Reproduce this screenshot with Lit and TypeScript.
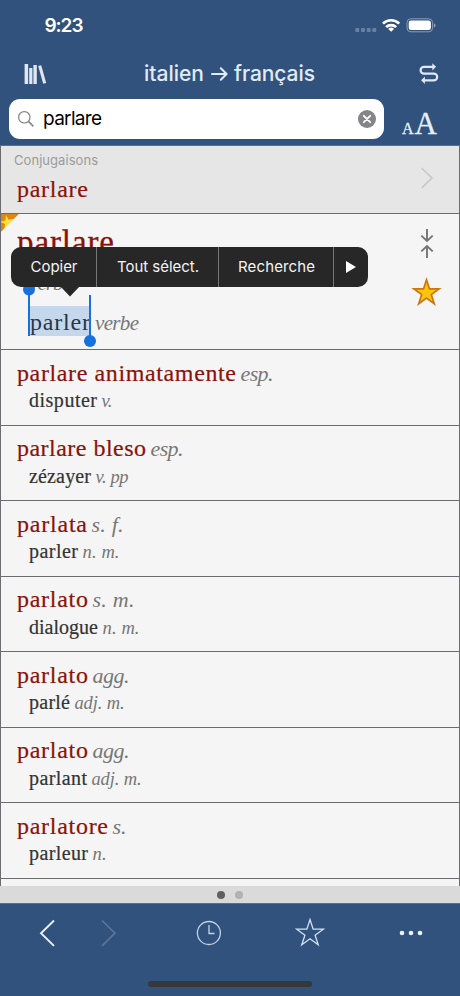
import { LitElement, html, css, svg } from "lit";
import { customElement, property } from "lit/decorators.js";

/* Text run whose tracking is adjusted so that it spans `w` pixels. */
@customElement("tracked-text")
class TrackedText extends LitElement {
  @property({ type: Number }) w = 0;
  @property() text = "";
  static styles = css`
    :host { display: inline-block; white-space: pre; }
    .run { display: inline-block; }
  `;
  updated() {
    const el = this.renderRoot.querySelector(".run") as HTMLElement;
    el.style.letterSpacing = "0";
    const natural = el.getBoundingClientRect().width;
    el.style.letterSpacing = `${(this.w - natural) / Math.max(1, this.text.length - 1)}px`;
    this.style.width = `${this.w}px`;
  }
  render() {
    return html`<span class="run">${this.text}</span>`;
  }
}

interface Entry {
  word: string; ww: number; pos: string; pw: number;
  tr: string; tw: number; tpos: string; tpw: number;
}

const entries: Entry[] = [
  { word: "parlare animatamente", ww: 219, pos: "esp.", pw: 33, tr: "disputer", tw: 68, tpos: "v.", tpw: 11 },
  { word: "parlare bleso", ww: 129, pos: "esp.", pw: 33, tr: "zézayer", tw: 62, tpos: "v. pp", tpw: 33 },
  { word: "parlata", ww: 70, pos: "s. f.", pw: 32, tr: "parler", tw: 49, tpos: "n. m.", tpw: 37 },
  { word: "parlato", ww: 71, pos: "s. m.", pw: 42, tr: "dialogue", tw: 69, tpos: "n. m.", tpw: 37 },
  { word: "parlato", ww: 71, pos: "agg.", pw: 37, tr: "parlé", tw: 41, tpos: "adj. m.", tpw: 50 },
  { word: "parlato", ww: 71, pos: "agg.", pw: 37, tr: "parlant", tw: 58, tpos: "adj. m.", tpw: 50 },
  { word: "parlatore", ww: 91, pos: "s.", pw: 14, tr: "parleur", tw: 59, tpos: "n.", tpw: 14 },
];

const t = (text: string, w: number, cls = "") =>
  html`<tracked-text class=${cls} .text=${text} .w=${w}></tracked-text>`;

const starPoints = "0,-1 .225,-.31 .951,-.309 .364,.118 .588,.809 0,.382 -.588,.809 -.364,.118 -.951,-.309 -.225,-.31";
const star = (cx: number, cy: number, r: number, rot = 0) => svg`
  <polygon points=${starPoints} transform="translate(${cx} ${cy}) rotate(${rot}) scale(${r})" vector-effect="non-scaling-stroke"></polygon>`;

@customElement("app-root")
class AppRoot extends LitElement {
  static styles = css`
    :host {
      display: flex; flex-direction: column; width: 460px; height: 996px;
      overflow: hidden; background: #31527c; color: #fff;
      font-family: Inter, "Liberation Sans", sans-serif;
    }
    * { box-sizing: border-box; }
    svg { display: block; fill: none; overflow: visible; }
    .status { height: 50px; flex: none; display: flex; justify-content: space-between; padding: 12px 25px 0 44.5px; }
    .time { font-size: 19px; font-weight: 600; line-height: 27px; }
    .nav { height: 49px; flex: none; display: grid; grid-template-columns: 120px 171px 1fr; align-items: center; padding: 0 22px 1px 24px; }
    .pair { display: flex; align-items: center; justify-content: space-between; font-size: 21px; font-weight: 500; line-height: 28px; color: #e1ebf8; }
    .swap { justify-self: end; margin-bottom: 2px; }
    .search { height: 46px; flex: none; display: flex; padding: 0 23px 0 9px; justify-content: space-between; }
    .field { width: 375px; height: 40px; border-radius: 11px; background: #fff; color: #000; display: flex; align-items: center; padding: 0 8px 0 9px; }
    .query { font-size: 19px; margin-left: 9px; flex: 1; line-height: 26px; }
    .sizes { display: flex; align-items: baseline; gap: 1px; font-family: "Liberation Serif", serif; color: #e6f0fb; line-height: 50px; -webkit-text-stroke: .3px #e6f0fb; }
    .small { font-size: 16px; }
    .big { font-size: 31px; }
    .list {
      flex: none; height: 741px; overflow: hidden; background: #f5f5f5;
      border: 1px solid #6c6c6f; border-bottom: 0; position: relative;
      font-family: "Liberation Serif", serif;
    }
    .conj { height: 67px; background: #e6e6e6; display: flex; justify-content: space-between; align-items: center; padding: 0 26px 0 13px; }
    .label { font-family: Inter, sans-serif; font-size: 13px; line-height: 16px; color: #9b9b9b; }
    .labels { display: flex; flex-direction: column; height: 100%; padding-top: 6px; }
    .chev { margin-bottom: 3px; }
    .conj .word { margin: 6px 0 0 3px; line-height: 30px; }
    .word { font-size: 24px; color: #8b1208; -webkit-text-stroke: .2px #8b1208; }
    .main { height: 136px; border-top: 1px solid #6c6c6f; display: flex; justify-content: space-between; position: relative; }
    .maintext { padding: 9px 0 0 16px; display: flex; flex-direction: column; }
    .headword { font-size: 33px; line-height: 38px; color: #8b1208; -webkit-text-stroke: .3px #8b1208; }
    .it { font-style: italic; color: #777; }
    .kind { font-size: 21px; line-height: 26px; margin: 9px 0 0 12px; }
    .selrow { display: flex; align-items: baseline; gap: 5px; margin: 10px 0 0 12px; line-height: 32px; height: 30px; }
    .sel { background: #c5d7ea; color: #26384f; font-size: 24px; padding-left: 1px; height: 30px; position: relative; display: flex; }
    .selrow .it { font-size: 21px; }
    .tools { width: 32px; margin-right: 16px; padding-top: 15px; display: flex; flex-direction: column; align-items: center; gap: 20px; }
    .corner { position: absolute; left: -1px; top: 0; }
    .handles { position: absolute; left: -6px; top: -23px; }
    .entry { height: 75.57px; border-top: 1px solid #6c6c6f; padding: 7.5px 0 0 16px; }
    .l1 { display: flex; align-items: baseline; gap: 4.5px; line-height: 30px; height: 30px; }
    .l2 { display: flex; align-items: baseline; gap: 4.5px; line-height: 24px; padding-left: 12px; margin-top: .5px; }
    .l1 .it { font-size: 22px; }
    .tr { font-size: 20px; color: #333; -webkit-text-stroke: .2px #333; }
    .l2 .it { font-size: 18.5px; }
    .last { border-top: 1px solid #6c6c6f; height: 10px; }
    .menu {
      position: absolute; left: 10px; top: 101px; width: 357px; height: 40px; border-radius: 10px;
      background: #272727; display: flex; color: #f4f4f4; font: 15px/40px Inter, sans-serif;
    }
    .menu .item { display: flex; align-items: center; justify-content: center; border-right: 1px solid #777; padding-left: 1px; }
    .menu .item:last-of-type { border-right: 0; }
    .m1 { width: 86px; } .m2 { width: 122px; } .m3 { width: 115px; } .m4 { width: 33px; }
    .tip { position: absolute; left: 49px; top: 39px; }
    .pager { height: 17px; flex: none; background: #dadada; display: flex; justify-content: center; align-items: center; gap: 10px; }
    .dot { width: 8px; height: 8px; border-radius: 50%; background: #b1b1b1; }
    .dot.on { background: #606060; }
    .tabs { flex: 1; border-top: 1px solid #54708e; display: flex; flex-direction: column; align-items: center; justify-content: space-between; padding-bottom: 9px; }
    .home { width: 164px; height: 6px; border-radius: 3px; background: #373838; }
  `;

  entry(e: Entry) {
    return html`<div class="entry">
      <div class="l1">${t(e.word, e.ww, "word")}${t(e.pos, e.pw, "it")}</div>
      <div class="l2">${t(e.tr, e.tw, "tr")}${t(e.tpos, e.tpw, "it")}</div>
    </div>`;
  }

  render() {
    return html`
      <div class="status">
        ${t("9:23", 39, "time")}
        <svg width="80" height="26" viewBox="355 12 80 26">
          <g fill="#6580a3"><rect x="355.3" y="28" width="4" height="4" rx="1"/><rect x="361" y="28" width="4" height="4" rx="1"/><rect x="366.7" y="28" width="4" height="4" rx="1"/><rect x="372.3" y="28" width="4" height="4" rx="1"/></g>
          <g stroke="#fff" stroke-width="2.7"><path d="M383 23.6a11.5 11.5 0 0 1 16.2 0"/><path d="M386.1 27.1a7.1 7.1 0 0 1 10 0"/></g>
          <path fill="#fff" d="M391.1 31.8 388.2 28.9a4.2 4.2 0 0 1 5.8 0z"/>
          <rect x="407" y="18.8" width="25.6" height="13" rx="3.8" stroke="#8b9db7"/>
          <rect x="408.7" y="20.5" width="22.2" height="9.6" rx="2.3" fill="#fff"/>
          <path fill="#8b9db7" d="M433.9 23.2c2.3.8 2.3 3.5 0 4.3z"/>
        </svg>
      </div>
      <div class="nav">
        <svg width="23" height="20" viewBox="24 63 23 20">
          <g fill="#dfe6ef"><rect x="24.6" y="63" width="3.5" height="20"/><rect x="29.2" y="67" width="3.2" height="16"/><rect x="33.4" y="64" width="3.4" height="19"/><path d="m38.2 65 3-.8 5 17.8-3 .8z"/></g>
        </svg>
        <div class="pair">
          ${t("italien", 60)}
          <svg width="17" height="16" viewBox="0 0 17 16" stroke="#e1ebf8" stroke-width="2" stroke-linecap="round" stroke-linejoin="round"><path d="M1 8h14.500M9.800 2.200 15.600 8l-5.800 5.800"/></svg>
          ${t("français", 81)}
        </div>
        <svg class="swap" width="18" height="20" viewBox="420 63 18 20" stroke="#dfe9f5" stroke-width="2.200">
          <path d="M434 66.800h-10a3.400 3.400 0 0 0 0 6.800h9.800a3.400 3.400 0 0 1 0 6.800H423.500"/>
          <g fill="#dfe9f5" stroke="none"><path d="M432.300 63.200l3.800 3.600-3.800 3.600z"/><path d="M424.900 76.600l-3.800 3.700 3.800 3.600z"/></g>
        </svg>
      </div>
      <div class="search">
        <div class="field">
          <svg width="16" height="16" viewBox="0 0 16 16" stroke="#858585" stroke-width="1.200"><circle cx="6.300" cy="6.300" r="5.700"/><path d="m10.400 10.400 5 5" stroke-width="1.500"/></svg>
          <span class="query">${t("parlare", 59)}</span>
          <svg width="18" height="18" viewBox="0 0 18 18"><circle cx="9" cy="9" r="9" fill="#858587"/><path stroke="#fff" stroke-width="1.900" stroke-linecap="round" d="m5.800 5.800 6.400 6.400m0-6.400-6.400 6.400"/></svg>
        </div>
        <div class="sizes"><span class="small">A</span><span class="big">A</span></div>
      </div>
      <div class="list">
        <div class="conj">
          <div class="labels">${t("Conjugaisons", 84, "label")}${t("parlare", 71, "word")}</div>
          <svg class="chev" width="12" height="22" viewBox="0 0 12 22" stroke="#c6c6c6" stroke-width="1.500"><path d="m.7 1 10.300 10-10.300 10"/></svg>
        </div>
        <div class="main">
          <svg class="corner" width="19" height="19" viewBox="0 0 19 19"><path fill="#df8613" d="M0 0h19L0 19z"/><g fill="#ffe03c">${star(7.5, 8.500, 7.500, -12)}</g><path fill="#f5f5f5" d="M19 0v19H0z"/></svg>
          <div class="maintext">
            ${t("parlare", 97, "headword")}
            ${t("verbe", 43, "it kind")}
            <div class="selrow">
              <span class="sel">${t("parler", 60)}
                <svg class="handles" width="76" height="64" viewBox="0 0 76 64"><g fill="#1770df"><circle cx="6" cy="6.500" r="6"/><rect x="5" y="8" width="2" height="45"/><rect x="66" y="12" width="2" height="46"/><circle cx="67" cy="58" r="6"/></g></svg>
              </span>
              ${t("verbe", 44, "it")}
            </div>
          </div>
          <div class="tools">
            <svg width="14" height="29" viewBox="0 0 14 29" stroke="#757575" stroke-width="1.900"><path d="M7 0v12M1.300 6.600 7 12l5.700-5.400M7 29V17M1.300 22.400 7 17l5.700 5.400"/></svg>
            <svg width="30" height="28" viewBox="0 0 30 28"><g fill="#fdc40d" stroke="#ca7612" stroke-width="1.700">${star(14.500, 15, 13.200)}</g></svg>
          </div>
        </div>
        ${entries.map((e) => this.entry(e))}
        <div class="last"></div>
        <div class="menu">
          <div class="item m1">${t("Copier", 47)}</div>
          <div class="item m2">${t("Tout sélect.", 82)}</div>
          <div class="item m3">${t("Recherche", 77)}</div>
          <div class="item m4"><svg width="10" height="12" viewBox="0 0 10 12"><path fill="#fff" d="M0 0l10 6-10 6z"/></svg></div>
          <svg class="tip" width="20" height="11" viewBox="0 0 20 11"><path fill="#272727" d="M0 0h20l-10 10.500z"/></svg>
        </div>
      </div>
      <div class="pager"><span class="dot on"></span><span class="dot"></span></div>
      <div class="tabs">
        <svg width="460" height="60" viewBox="0 904 460 60">
          <path stroke="#e9f0f8" stroke-width="1.900" d="m54 920.500-13 12.700 13 12.700"/>
          <path stroke="#58759b" stroke-width="1.700" d="m102 920.500 13 12.700-13 12.700"/>
          <g stroke="#c0d4ea" stroke-width="1.300"><circle cx="208.900" cy="933" r="11.500"/><path d="M209 925v8.500h5.500"/></g>
          <g stroke="#d2e1f3" stroke-width="1.300">${star(310, 933.5, 14)}</g>
          <g fill="#edf3fb"><circle cx="402" cy="933" r="2.300"/><circle cx="411" cy="933" r="2.300"/><circle cx="420" cy="933" r="2.300"/></g>
        </svg>
        <div class="home"></div>
      </div>
    `;
  }
}
